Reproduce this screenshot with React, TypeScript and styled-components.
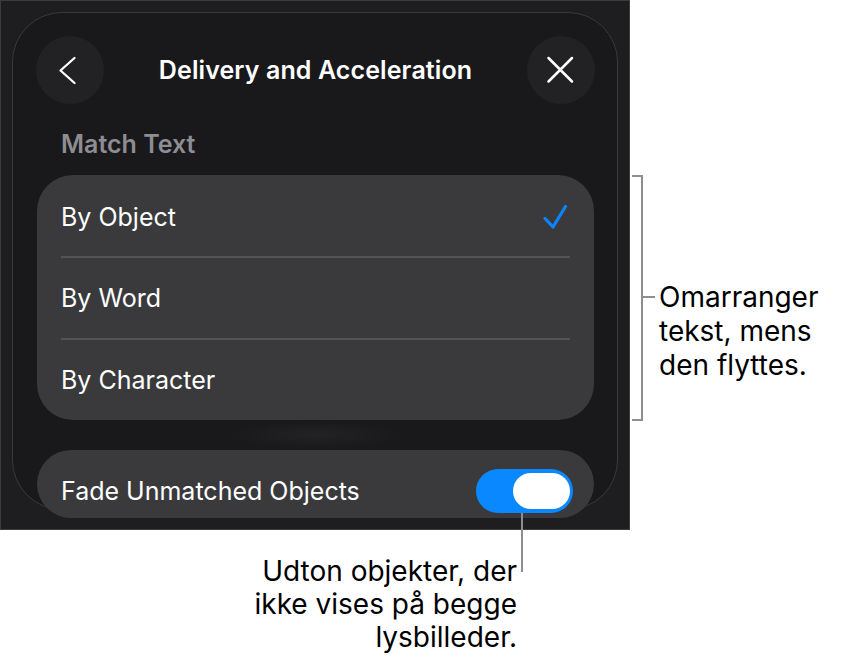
import React from "react";
import styled, { createGlobalStyle } from "styled-components";

const GlobalStyle = createGlobalStyle`
  html, body { margin: 0; padding: 0; background: #ffffff; }
  body { font-family: Inter, "Noto Sans", sans-serif; }
  * { box-sizing: border-box; }
`;

const Page = styled.div`
  width: 860px;
  height: 670px;
  display: grid;
  grid-template-columns: 630px 1fr;
  grid-template-rows: 530px 1fr;
  background: #ffffff;
`;

const Frame = styled.div`
  width: 630px;
  height: 530px;
  border: 1px solid #3c3c3e;
  background: #1e1e20;
  padding: 11px 11px 0 11px;
  overflow: hidden;
`;

const Sheet = styled.div`
  height: 498px;
  border: 1px solid #3a3a3c;
  border-radius: 50px;
  background: #19191b;
  padding: 23px 22px 0 23px;
  display: flex;
  flex-direction: column;
  & > * { flex-shrink: 0; }
`;

const Header = styled.div`
  height: 68px;
  display: flex;
  align-items: center;
  justify-content: space-between;
`;

const RoundButton = styled.div`
  width: 68px;
  height: 68px;
  border-radius: 50%;
  background: #222224;
  display: flex;
  align-items: center;
  justify-content: center;
`;

const Title = styled.div`
  color: #ffffff;
  font-size: 25px;
  font-weight: 600;
  letter-spacing: 0.1px;
`;

const SectionLabel = styled.div`
  margin-top: 25px;
  padding-left: 25px;
  color: #8d8d93;
  font-size: 25px;
  line-height: 30px;
  font-weight: 600;
`;

const ListCard = styled.div`
  margin: 16px 1px 0 1px;
  height: 245px;
  border-radius: 36px;
  background: #3a3a3c;
  display: flex;
  flex-direction: column;
`;

const Rows = styled.div`
  display: flex;
  flex-direction: column;
  height: 100%;
  padding-right: 24px;
`;

const OptionRow = styled.div<{ $divider?: boolean; $first?: boolean }>`
  flex: ${(p) => (p.$first ? "0 0 81px" : "1")};
  margin-left: 24px;
  padding-right: 1px;
  padding-top: ${(p) => (p.$first ? "3px" : "0")};
  display: flex;
  align-items: center;
  justify-content: space-between;
  border-top: ${(p) => (p.$divider ? "2px solid #545458" : "none")};
`;

const RowText = styled.span`
  color: #ffffff;
  font-size: 25px;
  line-height: 30px;
  font-weight: 400;
`;

const ScrollGhost = styled.div`
  height: 30px;
  background: radial-gradient(ellipse 90px 14px at 50% 50%, rgba(255,255,255,0.045), rgba(255,255,255,0) 100%);
`;

const FadeCard = styled.div`
  margin: 0 1px;
  height: 68px;
  border-radius: 34px;
  background: #3a3a3c;
  display: flex;
  align-items: center;
  justify-content: space-between;
  padding: 19px 21px 5px 24px;
`;

const Toggle = styled.div<{ $on?: boolean }>`
  width: 97px;
  height: 44px;
  border-radius: 22px;
  background: ${(p) => (p.$on ? "#0a88ff" : "#5a5a5e")};
  display: flex;
  align-items: center;
  justify-content: ${(p) => (p.$on ? "flex-end" : "flex-start")};
  padding: 0 3px;
`;

const Knob = styled.div`
  width: 57px;
  height: 36px;
  border-radius: 18px;
  background: #ffffff;
`;

const RightCallout = styled.div`
  padding-top: 175px;
  padding-left: 2px;
  display: flex;
  align-items: flex-start;
`;

const Bracket = styled.div`
  width: 11px;
  height: 246px;
  border-top: 2px solid #8e8e8e;
  border-right: 2px solid #8e8e8e;
  border-bottom: 2px solid #8e8e8e;
`;

const Tick = styled.div`
  margin-top: 121px;
  width: 12px;
  height: 2px;
  background: #8e8e8e;
`;

const CalloutText = styled.div<{ $align?: string; $lh?: number }>`
  color: #000000;
  font-size: 28px;
  line-height: ${(p) => p.$lh ?? 34}px;
  font-weight: 400;
  text-align: ${(p) => p.$align ?? "left"};
  white-space: nowrap;
`;

const RightText = styled(CalloutText)`
  margin-top: 105px;
  margin-left: 4px;
`;

const BottomCallout = styled.div`
  grid-column: 1 / 2;
  justify-self: end;
  margin-right: 113px;
  margin-top: 25px;
  position: relative;
`;

const Leader = styled.div`
  position: absolute;
  right: -6px;
  top: -42px;
  width: 2px;
  height: 59px;
  background: #8e8e8e;
`;

const ChevronLeft = () => (
  <svg width="30" height="30" viewBox="0 0 30 30" fill="none">
    <polyline points="19.5,3 5.5,15.5 19.5,28" stroke="#ffffff" strokeWidth="2.3" strokeLinecap="round" strokeLinejoin="round" />
  </svg>
);

const CloseX = () => (
  <svg width="30" height="30" viewBox="0 0 30 30" fill="none">
    <path d="M2.5 3 L26 26.5 M26 3 L2.5 26.5" stroke="#ffffff" strokeWidth="2.5" strokeLinecap="round" />
  </svg>
);

const Check = () => (
  <svg width="26" height="26" viewBox="0 0 26 26" fill="none">
    <polyline points="2,14.5 10,23 22.5,2.5" stroke="#0a84ff" strokeWidth="3.2" strokeLinecap="round" strokeLinejoin="round" />
  </svg>
);

const options = ["By Object", "By Word", "By Character"];

export default function App() {
  return (
    <>
      <GlobalStyle />
      <Page>
        <Frame>
          <Sheet>
            <Header>
              <RoundButton>
                <ChevronLeft />
              </RoundButton>
              <Title>Delivery and Acceleration</Title>
              <RoundButton>
                <CloseX />
              </RoundButton>
            </Header>
            <SectionLabel>Match Text</SectionLabel>
            <ListCard>
              <Rows>
                {options.map((o, i) => (
                  <OptionRow key={o} $divider={i > 0} $first={i === 0}>
                    <RowText>{o}</RowText>
                    {i === 0 && <Check />}
                  </OptionRow>
                ))}
              </Rows>
            </ListCard>
            <ScrollGhost />
            <FadeCard>
              <RowText>Fade Unmatched Objects</RowText>
              <Toggle $on>
                <Knob />
              </Toggle>
            </FadeCard>
          </Sheet>
        </Frame>
        <RightCallout>
          <Bracket />
          <Tick />
          <RightText>
            Omarranger
            <br />
            tekst, mens
            <br />
            den flyttes.
          </RightText>
        </RightCallout>
        <BottomCallout>
          <CalloutText $align="right" $lh={33}>
            Udton objekter, der
            <br />
            ikke vises på begge
            <br />
            lysbilleder.
          </CalloutText>
          <Leader />
        </BottomCallout>
      </Page>
    </>
  );
}
